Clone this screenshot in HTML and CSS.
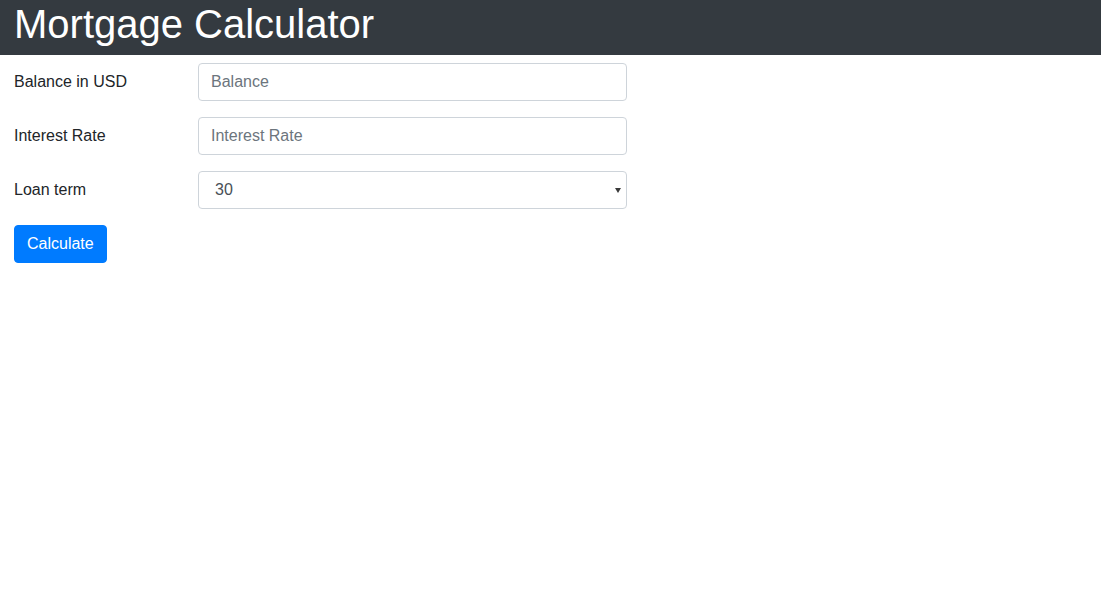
FILE: index.html
```html
<!DOCTYPE html>
<html lang="en">
<head>
<meta charset="utf-8">
<title>Mortgage Calculator</title>
<link rel="stylesheet" href="styles.css">
</head>
<body>
<header class="topbar">
  <h1 class="title">Mortgage Calculator</h1>
</header>
<main class="content">
  <form class="calc-form">
    <div class="form-row">
      <label class="form-label" for="balance">Balance in USD</label>
      <input class="form-control" id="balance" type="text" placeholder="Balance">
    </div>
    <div class="form-row">
      <label class="form-label" for="rate">Interest Rate</label>
      <input class="form-control" id="rate" type="text" placeholder="Interest Rate">
    </div>
    <div class="form-row">
      <label class="form-label" for="term">Loan term</label>
      <div class="select-wrap">
        <select class="form-control form-select" id="term">
          <option>30</option>
          <option>20</option>
          <option>15</option>
          <option>10</option>
        </select>
      </div>
    </div>
    <div class="actions">
      <button class="btn-primary" type="button">Calculate</button>
    </div>
  </form>
</main>
</body>
</html>
```
FILE: styles.css
```css
* { box-sizing: border-box; }
html, body {
  margin: 0;
  padding: 0;
  background: #fff;
  font-family: "Liberation Sans", Arial, Helvetica, sans-serif;
  font-size: 16px;
  line-height: 1.5;
  color: #212529;
}
.topbar {
  background: #343a40;
  height: 55px;
  padding: 0 14px;
}
.title {
  margin: 0;
  font-size: 40px;
  font-weight: 400;
  line-height: 48px;
  color: #fff;
}
.content {
  padding: 8px 14px;
}
.calc-form {
  display: flex;
  flex-direction: column;
  gap: 16px;
}
.form-row {
  display: flex;
  align-items: center;
}
.form-label {
  width: 184px;
  flex: none;
}
.form-control {
  width: 429px;
  height: 38px;
  padding: 6px 12px;
  font-family: inherit;
  font-size: 16px;
  line-height: 1.5;
  color: #495057;
  background: #fff;
  border: 1px solid #ced4da;
  border-radius: 4px;
  outline: none;
}
.form-control::placeholder {
  color: #6c757d;
  opacity: 1;
}
.select-wrap {
  position: relative;
  width: 429px;
}
.select-wrap::after {
  content: "";
  position: absolute;
  right: 6px;
  top: 17px;
  width: 0;
  height: 0;
  border-left: 3px solid transparent;
  border-right: 3px solid transparent;
  border-top: 5px solid #3a3a3a;
  pointer-events: none;
}
.form-select {
  -webkit-appearance: none;
  appearance: none;
  padding: 6px 24px 6px 16px;
}
.btn-primary {
  font-family: inherit;
  font-size: 16px;
  line-height: 1.5;
  color: #fff;
  background: #007bff;
  border: 1px solid #007bff;
  border-radius: 4px;
  padding: 6px 12px;
  cursor: pointer;
}
```
